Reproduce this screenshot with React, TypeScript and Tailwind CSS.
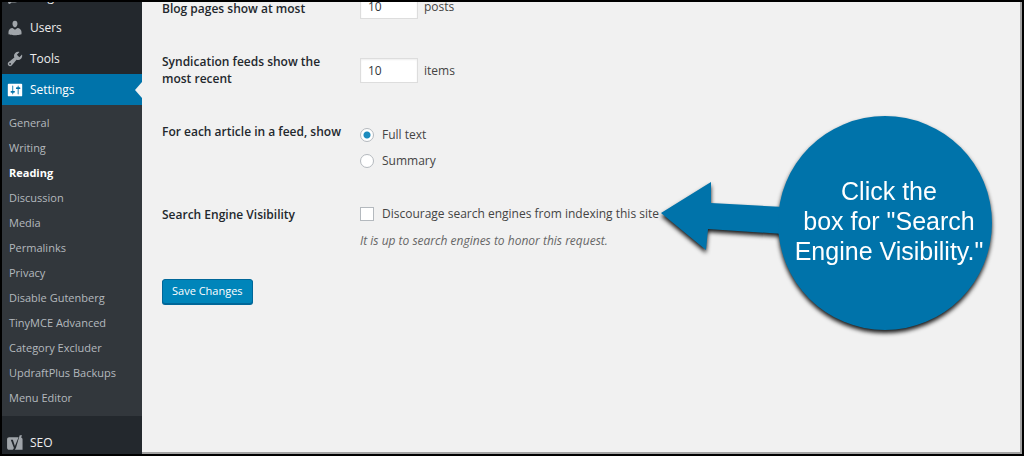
import { useState, type ReactNode } from "react";

type IconProps = { children: ReactNode };

function Icon({ children }: IconProps) {
  return (
    <svg viewBox="0 0 20 20" className="size-[18px] shrink-0 fill-current" aria-hidden="true">
      {children}
    </svg>
  );
}

const icons = {
  plugins: (
    <Icon>
      <path d="M13.11 4.36L9.87 7.6 8 5.73l3.24-3.24c.35-.34 1.05-.2 1.56.32.52.51.66 1.21.31 1.55zm-8 1.77l.91-1.12 9.01 9.01-1.19.84c-.71.71-2.63 1.16-3.82 1.16H6.14L4.9 17.26c-.59.59-1.54.59-2.12 0-.59-.58-.59-1.53 0-2.12l1.24-1.24v-3.88c0-1.13.4-3.19 1.09-3.89zm7.26 3.97l3.24-3.24c.34-.35 1.04-.21 1.55.31.52.51.66 1.21.31 1.55l-3.24 3.25z" />
    </Icon>
  ),
  users: (
    <Icon>
      <path d="M10 9.25c-2.27 0-2.73-3.44-2.73-3.44C7 4.02 7.82 2 9.97 2c2.16 0 2.98 2.02 2.71 3.81 0 0-.41 3.44-2.68 3.44zm0 2.57L12.72 10c2.39 0 4.52 2.33 4.52 4.53v2.49s-3.65 1.13-7.24 1.13c-3.65 0-7.24-1.13-7.24-1.13v-2.49c0-2.25 1.94-4.48 4.47-4.48z" />
    </Icon>
  ),
  tools: (
    <Icon>
      <path d="M16.68 9.77c-1.34 1.34-3.3 1.67-4.95.99l-5.41 6.52c-.99.99-2.59.99-3.58 0s-.99-2.59 0-3.57l6.52-5.42c-.68-1.65-.35-3.61.99-4.95 1.28-1.28 3.12-1.62 4.72-1.06l-2.89 2.89 2.82 2.82 2.86-2.87c.53 1.58.18 3.39-1.08 4.65zM3.81 16.21c.4.39 1.04.39 1.43 0 .4-.4.4-1.04 0-1.43-.39-.4-1.03-.4-1.43 0-.39.39-.39 1.03 0 1.43z" />
    </Icon>
  ),
  settings: (
    <Icon>
      <path d="M18 16V4c0-.55-.45-1-1-1H3c-.55 0-1 .45-1 1v12c0 .55.45 1 1 1h14c.55 0 1-.45 1-1zM8 11h1c.55 0 1 .45 1 1s-.45 1-1 1H8v1.5c0 .28-.22.5-.5.5s-.5-.22-.5-.5V13H6c-.55 0-1-.45-1-1s.45-1 1-1h1V5.5c0-.28.22-.5.5-.5s.5.22.5.5V11zm5-2h-1c-.55 0-1-.45-1-1s.45-1 1-1h1V5.5c0-.28.22-.5.5-.5s.5.22.5.5V7h1c.55 0 1 .45 1 1s-.45 1-1 1h-1v5.5c0 .28-.22.5-.5.5s-.5-.22-.5-.5V9z" />
    </Icon>
  ),
  seo: (
    <Icon>
      <path d="M3.5 3.5H14L9.9 13.2 7.6 6.4H5.3l3.5 9.1c-.5 1.4-1.1 2-2.4 2.1H3.5c-1.4 0-2.3-.9-2.3-2.3V5.8c0-1.4.9-2.3 2.3-2.3z" />
      <path d="M15.2 1.5h2.6l-1 2.400c1 .4 1.600 1.100 1.600 2.200v11.500H9.800c.6-.8 1-1.600 1.400-2.600z" />
    </Icon>
  ),
};

const submenu = [
  "General",
  "Writing",
  "Reading",
  "Discussion",
  "Media",
  "Permalinks",
  "Privacy",
  "Disable Gutenberg",
  "TinyMCE Advanced",
  "Category Excluder",
  "UpdraftPlus Backups",
  "Menu Editor",
];

function MenuItem({ icon, label, active = false }: { icon: ReactNode; label: string; active?: boolean }) {
  return (
    <a
      href="#"
      aria-current={active ? "true" : undefined}
      className={
        active
          ? "relative flex h-[31px] items-center gap-[6px] bg-[#0073aa] pl-1 text-white"
          : "flex h-[31px] items-center gap-[6px] pl-1 text-[#a0a5aa]"
      }
    >
      {icon}
      <span className={active ? "text-white" : "text-[#eeeeee]"}>{label}</span>
      {active && (
        <svg viewBox="0 0 7 16" className="absolute top-2 right-0 h-4 w-[7px] fill-[#f1f1f1]" aria-hidden="true">
          <path d="M7 0v16L0 8z" />
        </svg>
      )}
    </a>
  );
}

function Row({ label, htmlFor, className, children }: { label: string; htmlFor?: string; className: string; children: ReactNode }) {
  return (
    <div className={`flex ${className}`}>
      <div className="w-[198px] shrink-0 pt-5 pr-4 leading-[17px] font-semibold text-[#23282d]">
        {htmlFor ? <label htmlFor={htmlFor}>{label}</label> : label}
      </div>
      {children}
    </div>
  );
}

const fieldClass =
  "h-[25px] w-[58px] border border-[#dddddd] bg-white px-[7px] text-xs text-[#32373c] shadow-[inset_0_1px_2px_rgba(0,0,0,0.07)]";
const radioClass =
  "size-[14px] shrink-0 appearance-none rounded-full border border-[#b4b9be] bg-white checked:bg-[radial-gradient(circle,#1e8cbe_0_3px,#ffffff_4px)]";

export default function App() {
  const [feed, setFeed] = useState("full");

  return (
    <div className="flex h-screen overflow-hidden border-2 border-black bg-[#f1f1f1] font-['Open_Sans','Noto_Sans',sans-serif] text-xs text-[#444444]">
      <nav aria-label="Admin menu" className="w-[140px] shrink-0 bg-[#23282d]">
        <div className="-mt-[21px]">
          <MenuItem icon={icons.plugins} label="Plugins" />
          <MenuItem icon={icons.users} label="Users" />
          <MenuItem icon={icons.tools} label="Tools" />
          <MenuItem icon={icons.settings} label="Settings" active />
          <ul className="mb-[11px] bg-[#32373c] pt-[6px] pb-[5px] text-[11px]">
            {submenu.map((item) => (
              <li key={item}>
                <a
                  href="#"
                  className={
                    item === "Reading"
                      ? "flex h-[25px] items-center pl-[7px] font-bold text-white"
                      : "flex h-[25px] items-center pl-[7px] text-[#b4b9be]"
                  }
                >
                  {item}
                </a>
              </li>
            ))}
          </ul>
          <MenuItem icon={icons.seo} label="SEO" />
        </div>
      </nav>

      <main className="relative min-w-0 flex-1 border-r-2 border-b-2 border-[#a3a3a3] pl-5">
        <form className="-mt-[22px]" onSubmit={(event) => event.preventDefault()}>
          <Row label="Blog pages show at most" htmlFor="posts" className="h-[53px]">
            <div className="flex items-start gap-[6px] pt-[14px]">
              <input id="posts" defaultValue="10" className={fieldClass} />
              <span className="leading-[25px]">posts</span>
            </div>
          </Row>
          <Row label="Syndication feeds show the most recent" htmlFor="items" className="h-[70px]">
            <div className="flex items-start gap-[6px] pt-[25px]">
              <input id="items" defaultValue="10" className={fieldClass} />
              <span className="leading-[25px]">items</span>
            </div>
          </Row>
          <Row label="For each article in a feed, show" className="h-[83px]">
            <fieldset className="flex flex-col pt-[19px]">
              <label className="flex h-[26px] items-center gap-2">
                <input type="radio" name="feed" className={radioClass} checked={feed === "full"} onChange={() => setFeed("full")} />
                Full text
              </label>
              <label className="flex h-[26px] items-center gap-2">
                <input type="radio" name="feed" className={radioClass} checked={feed === "summary"} onChange={() => setFeed("summary")} />
                Summary
              </label>
            </fieldset>
          </Row>
          <Row label="Search Engine Visibility" className="h-[93px]">
            <div className="flex flex-col pt-[15px]">
              <label className="flex h-[26px] items-center gap-2">
                <input type="checkbox" className="size-[14px] shrink-0 appearance-none border border-[#b4b9be] bg-white checked:bg-[#1e8cbe]" />
                Discourage search engines from indexing this site
              </label>
              <p className="leading-[28px] text-[#666666] italic">It is up to search engines to honor this request.</p>
            </div>
          </Row>
          <button
            type="submit"
            className="h-[25px] rounded-[3px] border border-[#006799] bg-[#0085ba] px-[9px] text-[11px] font-medium text-white shadow-[0_1px_0_#006799]"
          >
            Save Changes
          </button>
        </form>

        <aside className="absolute top-[114px] left-[518px] flex drop-shadow-[0_3px_2px_rgba(0,0,0,0.9)]">
          <svg viewBox="0 0 124 214" className="-mr-[6px] h-[214px] w-[124px] fill-[#0073aa]" aria-hidden="true">
            <path d="M1 97L51 66 51 87 124 91V118L48 113 46 134z" />
          </svg>
          <p className="flex size-[214px] items-center justify-center rounded-full bg-[#0073aa] pb-1 pl-2 text-center font-['Liberation_Sans',Arial,sans-serif] text-[25px] leading-[30px] whitespace-nowrap text-white">
            <span>
              Click the
              <br />
              box for "Search
              <br />
              Engine Visibility."
            </span>
          </p>
        </aside>
      </main>
    </div>
  );
}
